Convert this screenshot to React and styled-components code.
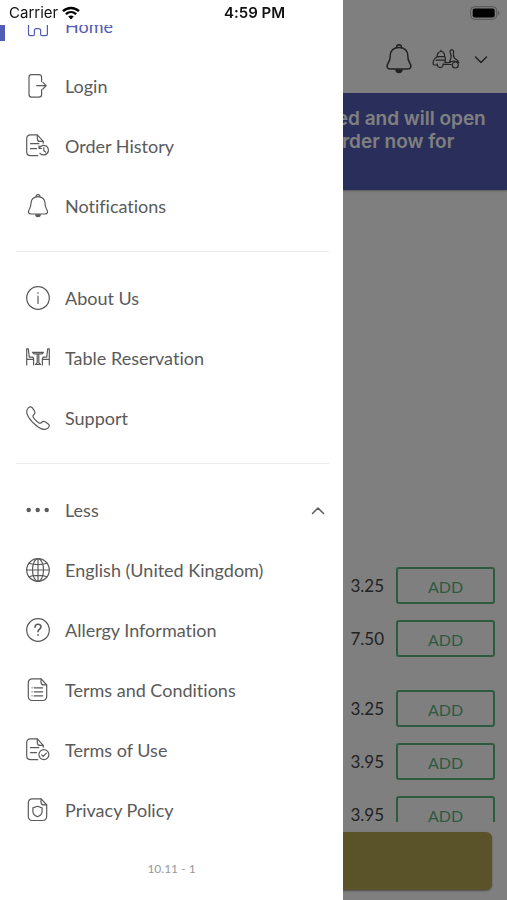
import React, { useState } from 'react';
import styled, { createGlobalStyle } from 'styled-components';

const GlobalStyle = createGlobalStyle`
  * {
    box-sizing: border-box;
  }
  body {
    margin: 0;
    background: #fff;
    font-family: Lato, 'Open Sans', sans-serif;
    font-variant-ligatures: none;
    color: #5a5a5a;
  }
  button {
    font-family: inherit;
  }
`;

const Screen = styled.div`
  height: 100vh;
  display: flex;
  flex-direction: column;
  overflow: hidden;
`;

const StatusBar = styled.header`
  position: fixed;
  inset: 0 0 auto 0;
  z-index: 3;
  height: 26px;
  padding: 0 7px 0 9px;
  display: grid;
  grid-template-columns: 1fr auto 1fr;
  align-items: center;
  font-family: Inter, sans-serif;
  font-size: 15px;
  line-height: 18px;
  color: #111;
`;

const Carrier = styled.div`
  display: flex;
  align-items: center;
  gap: 4px;
`;

const Time = styled.time`
  font-weight: 600;
`;

const Battery = styled.svg`
  justify-self: end;
`;

/* page behind the drawer */

const TopBar = styled.div`
  height: 93px;
  padding: 26px 19px 2px;
  display: flex;
  align-items: center;
  justify-content: flex-end;
  gap: 18px;
  flex-shrink: 0;
`;

const IconButton = styled.button`
  display: flex;
  align-items: center;
  gap: 14px;
  padding: 0;
  border: 0;
  background: none;
  color: #444;
`;

const Notice = styled.p`
  margin: 0;
  padding: 14px 9px 14px 12px;
  flex-shrink: 0;
  background: #525cb6;
  box-shadow: 0 1px 2px rgba(0, 0, 0, 0.3);
  color: #fff;
  font-family: Inter, sans-serif;
  font-size: 19px;
  font-weight: 600;
  line-height: 23px;
  text-align: center;
  white-space: pre-line;
`;

const Products = styled.main`
  flex: 1;
  min-height: 0;
  overflow: hidden;
  padding: 369px 12px 0;
`;

const ProductGroup = styled.section`
  margin-bottom: 17px;
`;

const Product = styled.div`
  height: 53px;
  display: flex;
  align-items: center;
  justify-content: flex-end;
  gap: 12px;
`;

const Price = styled.span`
  font-size: 17px;
  color: #444;
`;

const AddButton = styled.button`
  width: 99px;
  height: 37px;
  padding: 1px 0 0;
  border: 2px solid #5cb582;
  border-radius: 3px;
  background: none;
  color: #5cb582;
  font-size: 16px;
`;

const BasketBar = styled.div`
  flex-shrink: 0;
  padding: 10px 15px;
`;

const BasketButton = styled.button`
  display: block;
  width: 100%;
  height: 58px;
  border: 0;
  border-radius: 6px;
  background: #b5a452;
  box-shadow: 0 1px 2px rgba(0, 0, 0, 0.4);
`;

const Backdrop = styled.div`
  position: fixed;
  inset: 0;
  z-index: 1;
  background: rgba(0, 0, 0, 0.5);
`;

/* drawer */

const Drawer = styled.aside`
  position: fixed;
  inset: 0 auto 0 0;
  z-index: 2;
  width: calc(100% - 164px);
  padding-top: 25px;
  background: #fff;
`;

const DrawerScroll = styled.nav`
  height: 100%;
  display: flex;
  flex-direction: column;
  justify-content: flex-end;
  overflow: hidden;
`;

const Item = styled.a`
  height: 60px;
  flex-shrink: 0;
  padding: 0 17px 0 0;
  display: flex;
  align-items: center;
  width: 100%;
  border: 0;
  background: none;
  color: ${({ $active }) => ($active ? '#525cb6' : '#5a5a5a')};
  font-size: 18px;
  line-height: 24px;
  text-align: left;
  text-decoration: none;
  cursor: pointer;

  &::before {
    content: '';
    width: 5px;
    height: 30px;
    margin-right: 21px;
    background: ${({ $active }) => ($active ? '#525cb6' : 'transparent')};
  }
`;

const Label = styled.span`
  flex: 1;
  margin-left: 15px;
`;

const Divider = styled.hr`
  flex-shrink: 0;
  width: auto;
  height: 1px;
  margin: 15px 14px 16px 16px;
  border: 0;
  background: #ececec;
`;

const Version = styled.p`
  margin: 0;
  padding: 20px 0 22px;
  font-size: 12px;
  line-height: 18px;
  color: #999;
  text-align: center;
`;

const Glyph = styled.svg.attrs({
  fill: 'none',
  stroke: 'currentColor',
  strokeLinecap: 'round',
  strokeLinejoin: 'round',
  'aria-hidden': true,
})`
  flex-shrink: 0;
  stroke-width: 1.2;
`;

const bell = (
  <>
    <path d="M12 2.700c-4.200 0-7 2.700-7 6.400 0 2.700-.3 4.100-1.500 5.900-1.900 2.800-1.200 5 1.700 5h13.600c2.900 0 3.600-2.200 1.700-5-1.200-1.800-1.500-3.200-1.500-5.900 0-3.700-2.800-6.400-7-6.400z" />
    <path d="M10.100 2.800c-.4-3 4.200-3 3.800 0" />
    <path d="M9.600 20.800h4.800c-.5 2.600-4.300 2.600-4.800 0z" fill="currentColor" />
  </>
);

const foldedPage = (
  <>
    <path d="M17.200 9.200V7.400L11.300.9H4.700C2.200.9.700 2.300.7 4.800v13c0 2.500 1.500 3.900 4 3.900h7" />
    <path d="M11.300 1v3.600c0 1.900.9 2.800 2.800 2.800h3" />
    <path d="M4.500 9.700h8.300M4.500 14.700h6" />
  </>
);

const fullPage = (
  <>
    <path d="M15.200.8H6.500C3.700.8 2.300 2.300 2.300 5v13.300c0 2.700 1.400 4.200 4.200 4.200h10c2.700 0 4.200-1.500 4.200-4.200V7z" />
    <path d="M15 1v2.900c0 2 .9 3 2.900 3h2.700" />
  </>
);

const icons = {
  home: <path d="M2.500 9.500v10.300c0 1.300.6 1.900 1.900 1.900h2.500c1 0 1.500-.5 1.500-1.500v-3.700c0-1.300.6-1.900 1.900-1.900h2.400c1.300 0 1.900.6 1.900 1.900v3.700c0 1 .5 1.500 1.500 1.500h3.400c1.300 0 1.900-.6 1.900-1.900V9.500L12 1.500z" />,
  login: (
    <>
      <path d="M15.600 7.500V3.400c0-1.800-.8-2.700-2.700-2.700H5.700C3.800.7 3 1.600 3 3.400v17c0 1.800.8 2.700 2.700 2.700h7.200c1.900 0 2.700-.9 2.700-2.700v-4.700" />
      <path d="M10.700 11.700h9.500M16.900 8.400l3.300 3.300-3.300 3.300" />
    </>
  ),
  history: (
    <>
      {foldedPage}
      <path d="M13.200 14.300a4.800 4.800 0 1 1 .8 5M13 11.900v2.600h2.500M17.800 13.700v3l1.900 1.400" />
    </>
  ),
  bell,
  info: (
    <>
      <circle cx="12" cy="12" r="11.300" />
      <path d="M12 10.200v7.200M12 6.600v.6" />
    </>
  ),
  table: (
    <>
      <path d="M.7 19V2.800h1.600l1 8.300h3.500l.8 1.500V19M.9 13.400h6.500M23.300 19V2.800h-1.600l-1 8.300h-3.500l-.8 1.500V19M23.100 13.400h-6.500" />
      <path d="M6.500 6.300h11l-1.500 1.600H8zM11.200 8.200v8.500l-1.700 1.700h5l-1.700-1.700V8.200" />
    </>
  ),
  phone: <path d="M1.800 2.500C3 .6 4.900.2 6.200 1.700l2.100 3c1 1.600.8 2.800-.6 4-1 .9-1 1.700-.3 2.800 1.400 2.200 3.100 4 5.300 5.300 1.100.7 1.900.7 2.800-.3 1.200-1.300 2.400-1.500 4-.5l2.800 2c1.500 1.200 1.200 2.700-.4 4.100-2.600 2.200-6 1.300-9-.6-4.400-2.800-7.900-6.300-10.600-10.700C.6 8 0 5.200 1.800 2.500z" />,
  dots: (
    <g fill="currentColor" stroke="none">
      <circle cx="2.700" cy="12" r="2.200" />
      <circle cx="11.700" cy="12" r="2.200" />
      <circle cx="20.700" cy="12" r="2.200" />
    </g>
  ),
  globe: (
    <>
      <circle cx="12" cy="12" r="11.300" />
      <ellipse cx="12" cy="12" rx="5.500" ry="11.300" />
      <path d="M12 .7v22.600M.7 12h22.600M3 5.200c5 1.900 13 1.900 18 0M3 18.800c5-1.900 13-1.900 18 0" />
    </>
  ),
  question: (
    <>
      <circle cx="12" cy="12" r="11.300" />
      <path strokeWidth="1.600" d="M9 9.200c.2-4 6-3.900 6-.4 0 2.300-3 2.300-3 5M12 16.900v.3" />
    </>
  ),
  terms: (
    <>
      {fullPage}
      <path d="M8.200 9.800h8.500M8.200 13.800h8.500M8.200 17.800h8.500M6 9.800h.1M6 13.800h.1M6 17.800h.1" />
    </>
  ),
  use: (
    <>
      {foldedPage}
      <circle cx="17.900" cy="16.600" r="5" />
      <path d="M15.700 16.800l1.500 1.500 3.100-3.200" />
    </>
  ),
  privacy: (
    <>
      {fullPage}
      <path d="M11.500 8.200l4.600 1.700v3.500c0 2.600-1.900 4.300-4.600 5.300-2.700-1-4.600-2.700-4.600-5.300V9.900z" />
    </>
  ),
};

const Icon = ({ name }) => (
  <Glyph width="24" height="24" viewBox="0 0 24 24">
    {icons[name]}
  </Glyph>
);

const MAIN_LINKS = [
  { icon: 'home', label: 'Home', active: true },
  { icon: 'login', label: 'Login' },
  { icon: 'history', label: 'Order History' },
  { icon: 'bell', label: 'Notifications' },
];

const INFO_LINKS = [
  { icon: 'info', label: 'About Us' },
  { icon: 'table', label: 'Table Reservation' },
  { icon: 'phone', label: 'Support' },
];

const MORE_LINKS = [
  { icon: 'globe', label: 'English (United Kingdom)' },
  { icon: 'question', label: 'Allergy Information' },
  { icon: 'terms', label: 'Terms and Conditions' },
  { icon: 'use', label: 'Terms of Use' },
  { icon: 'privacy', label: 'Privacy Policy' },
];

const PRICES = [
  ['3.25', '7.50'],
  ['3.25', '3.95', '3.95'],
];

const Links = ({ items }) =>
  items.map(({ icon, label, active }) => (
    <Item key={label} href="#" $active={active} aria-current={active ? 'page' : undefined}>
      <Icon name={icon} />
      <Label>{label}</Label>
    </Item>
  ));

export default function App() {
  const [expanded, setExpanded] = useState(true);

  return (
    <>
      <GlobalStyle />
      <StatusBar>
        <Carrier>
          Carrier
          <svg width="18" height="14" viewBox="0 0 18 14" fill="none" stroke="#000" strokeWidth="2.400">
            <path d="M1 5.200c4.600-4.300 11.400-4.300 16 0M3.900 8.200c3-2.800 7.200-2.800 10.200 0" />
            <path d="M9 13.500l-2.800-3c1.700-1.500 3.900-1.500 5.600 0z" fill="#000" stroke="none" />
          </svg>
        </Carrier>
        <Time>4:59 PM</Time>
        <Battery width="30" height="14" viewBox="0 0 30 14">
          <rect x=".7" y=".7" width="26" height="12.600" rx="3.800" fill="none" stroke="#555" />
          <rect x="2.700" y="2.500" width="22" height="9" rx="2" fill="#000" />
          <path d="M28 4.800c2 .8 2 3.600 0 4.400z" fill="#555" />
        </Battery>
      </StatusBar>

      <Screen>
        <TopBar>
          <IconButton type="button" aria-label="Notifications">
            <Glyph width="30" height="30" viewBox="0 0 24 24">
              {bell}
            </Glyph>
          </IconButton>
          <IconButton type="button" aria-label="Delivery method">
            <Glyph width="28" height="20" viewBox="0 0 28 20">
              <path d="M4.800 8.200C3 9 1.200 11.700 1 14.200c0 1.200.4 1.800 1.500 1.800h2.800M5.200 7c0-2.600 1.400-4.500 3.700-4.500s3.700 1.900 3.700 4.500M8.900 2.300V1.200M4.800 7.600h8.200c.7 2 .3 4.300 0 6.400M4.200 11.200h8.600" />
              <path d="M5.200 14.800c-.4 5 6.300 5 6 0M11 15.500h8.200M13 13.700h4.200c1.200-2.700 2-4.500 2-6.700l-.8-3c-.9-2.200 0-3.200 1.400-3.200 1.500 0 2.100 1 1.700 2.700-.5 2.400-.1 4 1.100 5.800 1.600.9 3.400 2.300 4.200 4.300M17.200 13.700c2.200-1.700 6.200-2 9.600-.1" />
              <circle cx="23.300" cy="16" r="3" />
            </Glyph>
            <Glyph width="14" height="14" viewBox="0 0 14 14">
              <path d="M1.500 5l5.500 5.500L12.500 5" strokeWidth="1.500" />
            </Glyph>
          </IconButton>
        </TopBar>
        <Notice>
          {'This restaurant is temporarily closed and will open\nagain shortly. You can still preorder now for\nlater.'}
        </Notice>
        <Products>
          {PRICES.map((group, g) => (
            <ProductGroup key={g}>
              {group.map((price, i) => (
                <Product key={i}>
                  <Price>{price}</Price>
                  <AddButton type="button">ADD</AddButton>
                </Product>
              ))}
            </ProductGroup>
          ))}
        </Products>
        <BasketBar>
          <BasketButton type="button" aria-label="Basket" />
        </BasketBar>
      </Screen>

      <Backdrop />

      <Drawer>
        <DrawerScroll aria-label="Menu">
          <Links items={MAIN_LINKS} />
          <Divider />
          <Links items={INFO_LINKS} />
          <Divider />
          <Item as="button" type="button" aria-expanded={expanded} onClick={() => setExpanded(!expanded)}>
            <Icon name="dots" />
            <Label>{expanded ? 'Less' : 'More'}</Label>
            <Glyph width="16" height="16" viewBox="0 0 16 16">
              <path d={expanded ? 'M2.500 11.500L8 6l5.500 5.500' : 'M2.500 5.500L8 11l5.500-5.500'} strokeWidth="1.500" />
            </Glyph>
          </Item>
          {expanded && <Links items={MORE_LINKS} />}
          <Version>10.11 - 1</Version>
        </DrawerScroll>
      </Drawer>
    </>
  );
}
